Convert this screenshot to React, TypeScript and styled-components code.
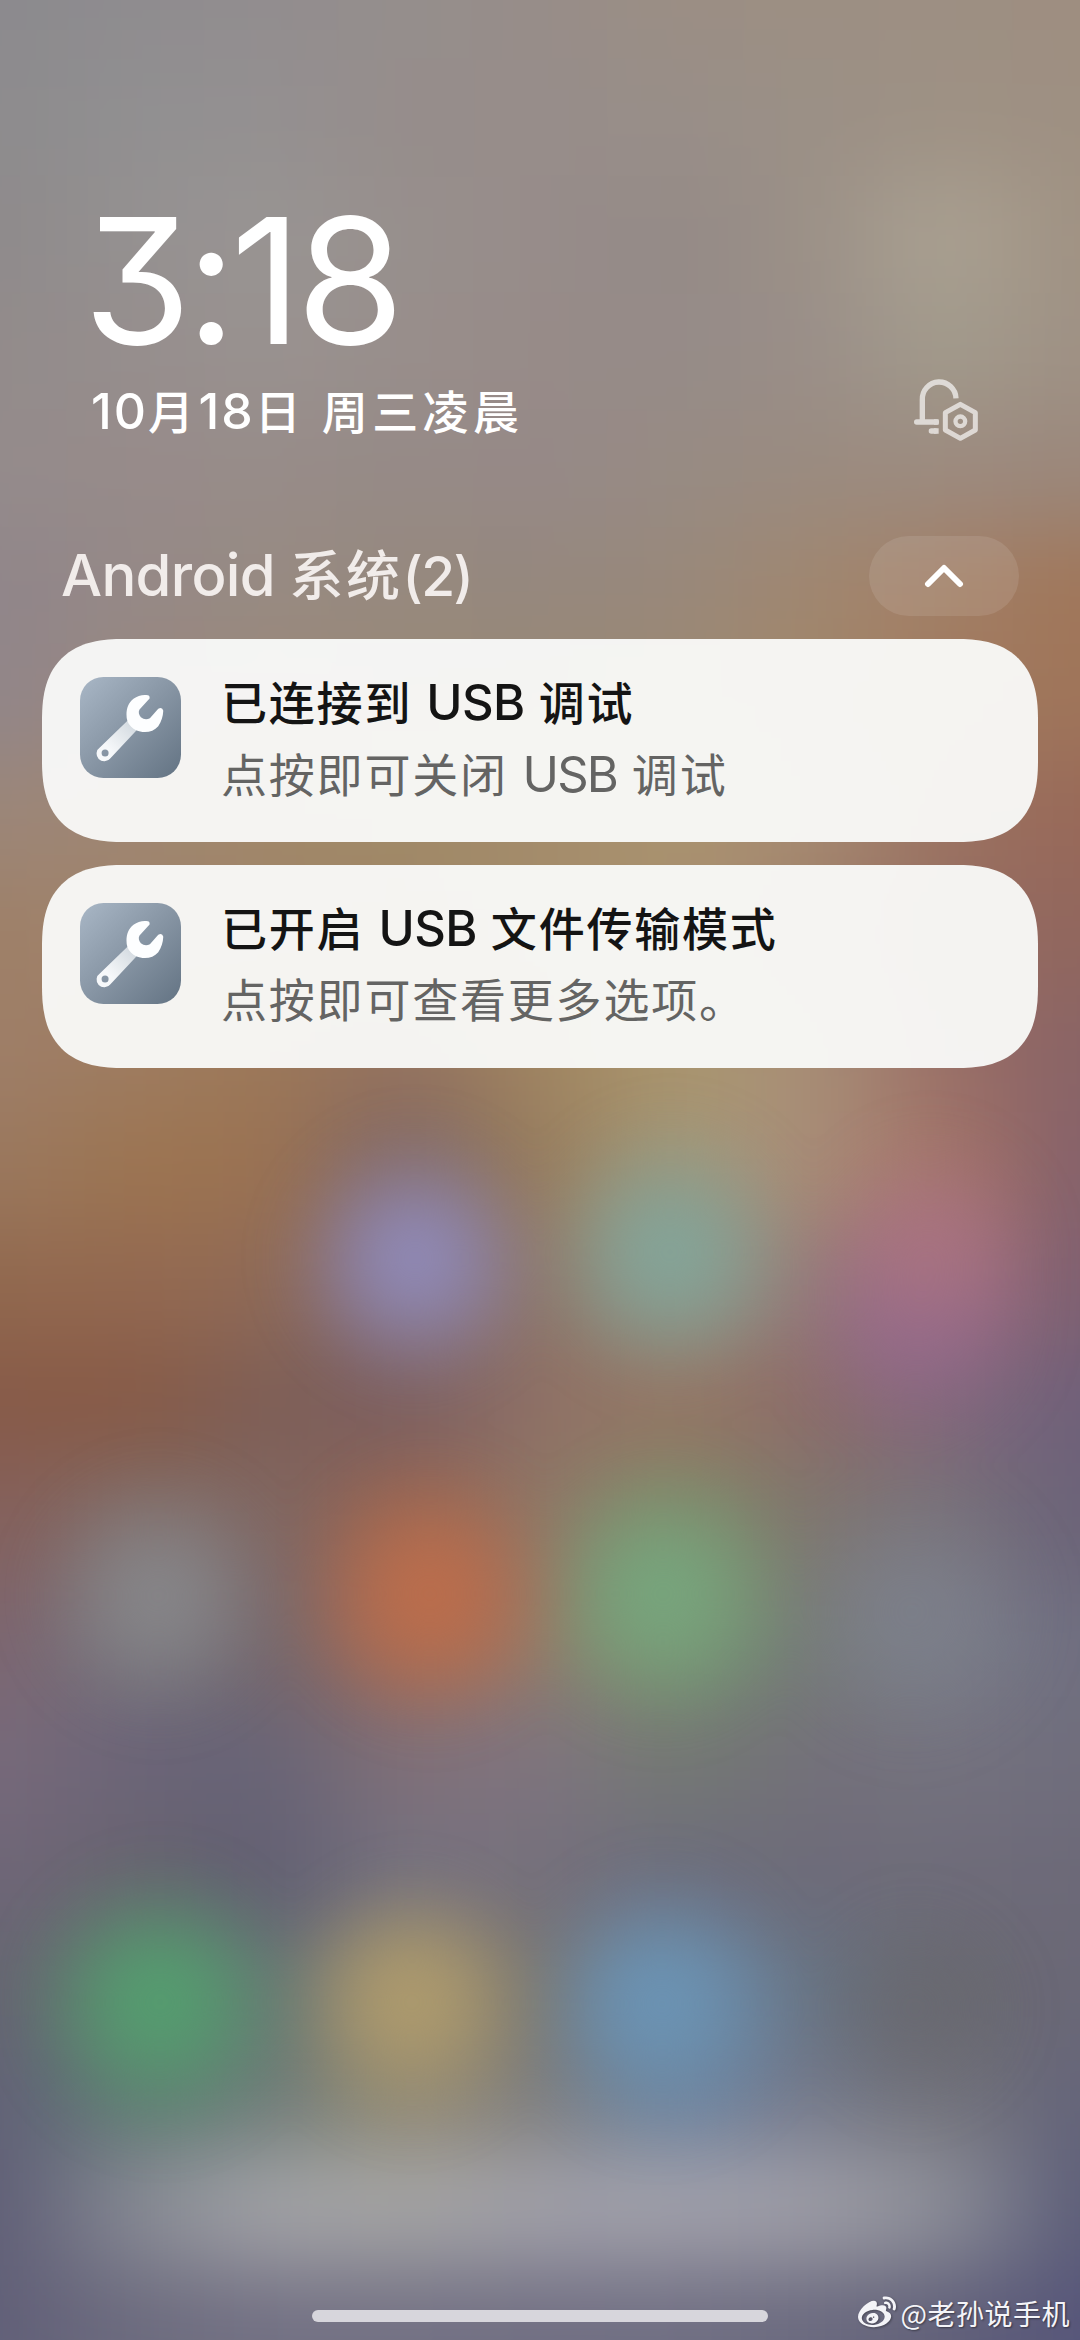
import React from "react";
import styled, { createGlobalStyle } from "styled-components";
import { FaWeibo } from "react-icons/fa";

const GlobalStyle = createGlobalStyle`
  * { box-sizing: border-box; }
  body { margin: 0; }
`;

const STEP_X = 135;
const STEP_Y = 117;
const BLEED = 160;

const wallpaperBands: string[] = [
  "8b8a8e 8f8c8f 928d8f 958e8c 978d89 9b8e84 9c8f83 9d8f83 9e8e80",
  "8d8b8d 919091 949091 968d8b 978d8a 988e88 9b9086 9e9184 9e9082",
  "8e8a8b 959191 999593 978f8c 978c8a 948a87 9b9086 aba293 9f9182",
  "928b8b 968e8d 999290 988e8b 978b88 958b88 9a8e88 a39c8d 9e9084",
  "948b8b 978b8a 978c89 968a86 968988 978b83 9a8b80 9c8b80 9b877b",
  "90858a 958987 978a82 96897e 95887e 98887b a08770 a37f66 a07659",
  "91868a 9a877e 9c8878 9a8876 998874 9c8a72 a28668 a07a60 9f7459",
  "9c8678 9f8672 a08868 a08a68 a38c6c ab9470 a58a72 9a7262 986858",
  "9e8068 a0826a a0826a a08564 a38a68 a8906e a0806c 966c60 90665e",
  "9e7e68 9e7c60 9c7858 927060 a08560 aa966e a89078 9a6e66 886366",
  "9a785e 9c7450 9b7252 7e6664 987c5c a49878 a88c78 a57468 84606a",
  "91684e 936850 8f6a56 7e6a78 8f7668 908a7a 957a78 9c6c7c 7e6070",
  "875a48 875a46 7d5e56 7c6062 8f7066 957864 8c6c68 80687a 6e607a",
  "85605c 806c68 7f6864 946250 907868 808a68 80766e 78727a 6a6278",
  "7d6570 74727a 74666c 9e6a58 937c6c 75906f 757a76 7a7c88 6f6e80",
  "786a7a 6b6478 676476 827078 7f7480 747a72 74707a 75737f 6f6d7c",
  "6f6678 68646f 615e72 767380 76707b 6c6d7c 6d6b78 6f6c7a 6c6978",
  "666472 5f786c 667476 8c846e 78756f 6a7e96 687585 69696f 6a6877",
  "626178 607a74 6c7a78 938a74 7d7c7c 6c82a0 74788a 73737a 64647a",
  "5e5d75 888b95 a5a5a9 a6a6a5 a2a1aa a3a2ac a09fa8 8e9099 5b5c77",
  "615f78 6c6b7e 727083 727083 706e82 6f6e82 6a697e 605f78 56557a",
];

const bandGradient = (tints: string) =>
  tints
    .split(" ")
    .map((tint, i) => `#${tint} ${BLEED + i * STEP_X}px`)
    .join(", ");

/* The dock sits a little above the regular rhythm of the bands. */
const bandHeight = (index: number) => {
  const last = wallpaperBands.length - 1;
  if (index === 0) return STEP_Y / 2 + BLEED;
  if (index === last) return STEP_Y / 2 + BLEED + 16;
  if (index === last - 2) return STEP_Y - 16;
  return STEP_Y;
};

type Glow = { x: number; y: number; r: number; rgb: string; strength: number };

const appGlows: Glow[] = [
  { x: 415, y: 1258, r: 180, rgb: "144, 138, 184", strength: 0.9 },
  { x: 670, y: 1252, r: 185, rgb: "132, 164, 152", strength: 0.94 },
  { x: 930, y: 1245, r: 160, rgb: "174, 116, 130", strength: 0.62 },
  { x: 915, y: 1325, r: 175, rgb: "148, 104, 146", strength: 0.6 },
  { x: 158, y: 1596, r: 175, rgb: "136, 137, 140", strength: 0.8 },
  { x: 430, y: 1594, r: 185, rgb: "186, 109, 76", strength: 0.97 },
  { x: 663, y: 1594, r: 185, rgb: "119, 164, 124", strength: 0.97 },
  { x: 912, y: 1612, r: 185, rgb: "126, 130, 142", strength: 0.6 },
  { x: 160, y: 2002, r: 188, rgb: "85, 155, 111", strength: 0.99 },
  { x: 412, y: 2002, r: 178, rgb: "172, 153, 109", strength: 0.97 },
  { x: 662, y: 2004, r: 188, rgb: "107, 146, 178", strength: 0.99 },
  { x: 915, y: 2008, r: 150, rgb: "104, 103, 110", strength: 0.5 },
];

/* Bell-shaped falloff, so that a glow has no visible rim. */
const glowGradient = ({ x, y, r, rgb, strength }: Glow) => {
  const stops = [0, 0.1, 0.2, 0.3, 0.4, 0.5, 0.6, 0.7, 0.8, 0.9, 1].map((t) => {
    const alpha = strength * Math.pow(Math.cos((t * Math.PI) / 2), 3);
    return `rgba(${rgb}, ${alpha.toFixed(3)}) ${t * 100}%`;
  });
  return `radial-gradient(circle ${r}px at ${x}px ${y}px, ${stops.join(", ")})`;
};

const Screen = styled.main`
  position: relative;
  isolation: isolate;
  width: 1080px;
  height: 2340px;
  overflow: hidden;
  display: flex;
  flex-direction: column;
  background: #85776f;
  font-family: Inter, "Noto Sans CJK SC", sans-serif;
`;

const Wallpaper = styled.div`
  position: absolute;
  z-index: -1;
  inset: 0;
  overflow: hidden;
`;

const Blurred = styled.div`
  display: flex;
  flex-direction: column;
  margin: -${BLEED}px;
  filter: blur(44px);
`;

const Band = styled.div<{ $tints: string; $height: number }>`
  flex: none;
  height: ${(p) => p.$height}px;
  background: linear-gradient(to right, ${(p) => bandGradient(p.$tints)});
`;

const AppGlows = styled.div`
  position: absolute;
  inset: 0;
  background: ${appGlows.map(glowGradient).join(", ")};
  filter: blur(10px);
`;

const Header = styled.header`
  height: 536px;
  padding: 185px 102px 0 91px;
  color: #fff;
`;

const Clock = styled.time`
  display: block;
  height: 190px;
  margin-left: -8px;
  font-size: 175px;
  line-height: 190px;
  font-weight: 400;
  letter-spacing: -5.6px;
  font-feature-settings: "cv09" 1;
`;

const DateRow = styled.div`
  display: flex;
  justify-content: space-between;
  height: 74px;
`;

const DateText = styled.div`
  font-size: 46px;
  line-height: 72px;
  font-weight: 500;
  letter-spacing: 4.4px;
  white-space: pre;
`;

const Latin = styled.span<{ $size: number; $tracking: number }>`
  font-size: ${(p) => p.$size}px;
  letter-spacing: ${(p) => p.$tracking}px;
`;

const BellIcon = styled.svg`
  width: 64px;
  height: 62px;
  margin-top: 4px;
  fill: none;
  stroke: #fff;
  opacity: 0.66;
`;

const GroupBar = styled.div`
  display: flex;
  align-items: center;
  justify-content: space-between;
  height: 80px;
  margin: 0 61px 23px;
`;

const GroupTitle = styled.h2`
  margin: 0;
  color: #f1ecea;
  font-size: 54px;
  line-height: 80px;
  font-weight: 500;
  letter-spacing: 2.5px;
  white-space: pre;
`;

const CollapseButton = styled.button`
  display: grid;
  place-items: center;
  width: 150px;
  height: 80px;
  padding: 0;
  border: 0;
  border-radius: 40px;
  background: rgba(255, 255, 255, 0.1);
`;

const NotificationList = styled.section`
  display: flex;
  flex-direction: column;
  gap: 23px;
  margin: 0 42px;
`;

const Card = styled.article`
  display: flex;
  gap: 40px;
  height: 203px;
  padding: 38px;
  border-radius: 68px;
  background: rgba(250, 251, 250, 0.945);
  @supports (corner-shape: superellipse(1.4)) {
    border-radius: 82px;
    corner-shape: superellipse(1.35);
  }
`;

const AppIcon = styled.svg`
  flex: none;
  width: 101px;
  height: 101px;
`;

const CardText = styled.div`
  display: flex;
  flex-direction: column;
  margin-top: -10px;
  white-space: pre;
`;

const CardTitle = styled.div`
  color: #141414;
  font-size: 46px;
  line-height: 71px;
  font-weight: 500;
  letter-spacing: 1.8px;
`;

const CardBody = styled.div`
  color: #646463;
  font-size: 46px;
  line-height: 71px;
  font-weight: 400;
  letter-spacing: 1.8px;
`;

const Footer = styled.footer`
  display: grid;
  grid-template-columns: 312px 456px 1fr;
  align-items: center;
  height: 49px;
  margin-top: auto;
`;

const HomeIndicator = styled.div`
  grid-column: 2;
  height: 12px;
  border-radius: 6px;
  background: #d7d6dc;
`;

const Watermark = styled.div`
  display: flex;
  align-items: center;
  justify-content: flex-end;
  gap: 5px;
  padding: 0 10px 5px 0;
  color: #f4f4f8;
  font-size: 28px;
  line-height: 40px;
  letter-spacing: 0.5px;
  font-family: "Noto Sans CJK SC", sans-serif;
  text-shadow: 1px 1px 2px rgba(0, 0, 0, 0.45);
  white-space: nowrap;
  svg { filter: drop-shadow(1px 1px 1px rgba(0, 0, 0, 0.35)); }
`;

function BellSettings() {
  return (
    <BellIcon viewBox="0 0 192 186">
      <path d="M25 129V62A50.500 51 0 0 1 126 58" strokeWidth="16" />
      <path d="M8 129H67" strokeWidth="16" strokeLinecap="round" />
      <path d="M60 129H74M60 156H74" strokeWidth="16" />
      <path d="M52 156H64" strokeWidth="16" strokeLinecap="round" />
      <path d="M139 76L184 101V153L139 178L94 153V101Z" strokeWidth="15" strokeLinejoin="round" />
      <circle cx="139" cy="127" r="14.5" strokeWidth="13" />
    </BellIcon>
  );
}

function WrenchIcon({ id }: { id: string }) {
  return (
    <AppIcon viewBox="0 0 302 302">
      <defs>
        <linearGradient id={`${id}-tile`} x1="0" y1="0" x2="1" y2="1">
          <stop offset="0" stopColor="#a9b7c6" />
          <stop offset="0.5" stopColor="#8795a4" />
          <stop offset="1" stopColor="#637383" />
        </linearGradient>
        <linearGradient id={`${id}-handle`} x1="1" y1="0" x2="0" y2="1">
          <stop offset="0.1" stopColor="#d3dae0" />
          <stop offset="0.7" stopColor="#f6f8fa" />
        </linearGradient>
      </defs>
      <rect width="302" height="302" rx="70" fill={`url(#${id}-tile)`} />
      <path
        fillRule="evenodd"
        fill={`url(#${id}-handle)`}
        d="M145 128L60 210A23 23 0 1 0 91 243L172 156ZM75 216.500a10.500 10.500 0 1 1 0 21a10.500 10.500 0 1 1 0-21Z"
      />
      <path
        fill="#fdfeff"
        d="M198 54Q210 54 208 64L178 97Q172 108 182 120Q195 131 209 123L234 95Q246 88 249 101C248 118 244 133 234 147C221 162 200 168 180 163C168 161 161 157 153 149C142 138 139 126 139 112C139 94 145 76 160 65C171 57 184 53 198 54Z"
      />
    </AppIcon>
  );
}

export default function App() {
  return (
    <Screen>
      <GlobalStyle />
      <Wallpaper>
        <Blurred>
          {wallpaperBands.map((tints, i) => (
            <Band key={i} $tints={tints} $height={bandHeight(i)} />
          ))}
        </Blurred>
        <AppGlows />
      </Wallpaper>

      <Header>
        <Clock>3:18</Clock>
        <DateRow>
          <DateText>
            <Latin $size={50} $tracking={2}>10</Latin>月
            <Latin $size={50} $tracking={2}>18</Latin>日 周三凌晨
          </DateText>
          <BellSettings />
        </DateRow>
      </Header>

      <GroupBar>
        <GroupTitle>
          <Latin $size={58} $tracking={-0.7}>Android </Latin>系统<Latin $size={55} $tracking={-1.6}>(2)</Latin>
        </GroupTitle>
        <CollapseButton aria-label="收起">
          <svg width="40" height="24" viewBox="0 0 40 24" fill="none">
            <path d="M4 20L20 4L36 20" stroke="#fff" strokeWidth="6" strokeLinecap="round" strokeLinejoin="round" />
          </svg>
        </CollapseButton>
      </GroupBar>

      <NotificationList>
        <Card>
          <WrenchIcon id="debug" />
          <CardText>
            <CardTitle>已连接到 <Latin $size={49} $tracking={-0.6}>USB</Latin> 调试</CardTitle>
            <CardBody>点按即可关闭 <Latin $size={49} $tracking={-1.8}>USB</Latin> 调试</CardBody>
          </CardText>
        </Card>
        <Card>
          <WrenchIcon id="transfer" />
          <CardText>
            <CardTitle>已开启 <Latin $size={49} $tracking={-0.6}>USB</Latin> 文件传输模式</CardTitle>
            <CardBody>点按即可查看更多选项。</CardBody>
          </CardText>
        </Card>
      </NotificationList>

      <Footer>
        <HomeIndicator />
        <Watermark>
          <FaWeibo size={38} />
          @老孙说手机
        </Watermark>
      </Footer>
    </Screen>
  );
}
